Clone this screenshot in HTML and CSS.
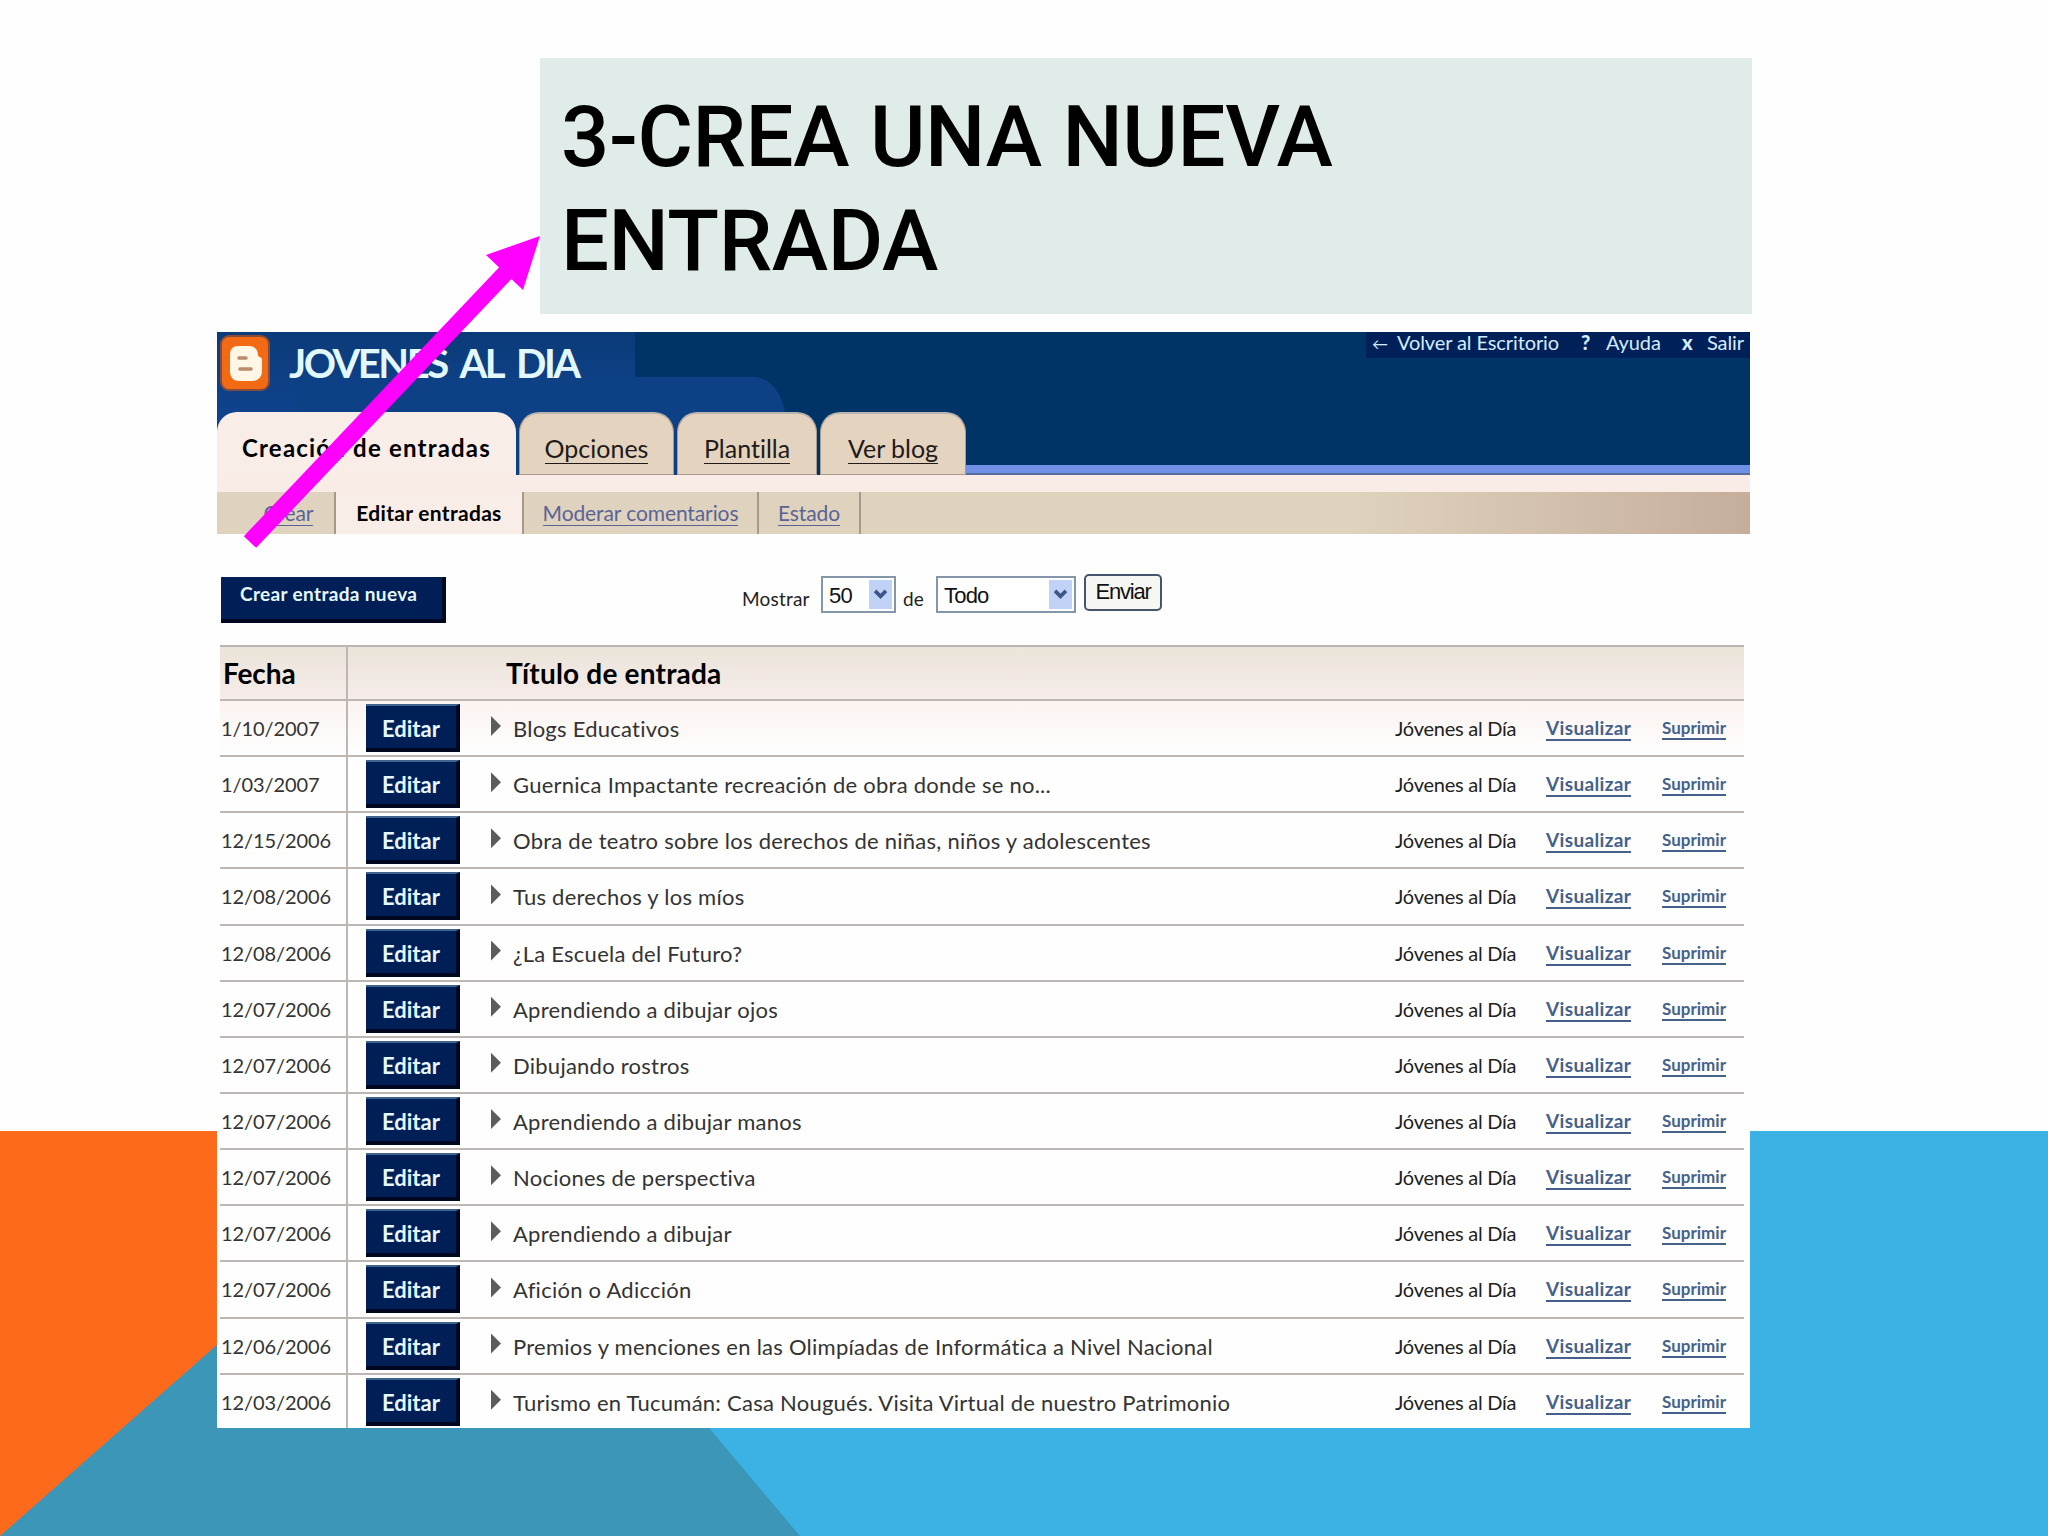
FILE: index.html
```html
<!DOCTYPE html>
<html lang="es">

<head>
    <meta charset="utf-8">
    <title>3-Crea una nueva entrada</title>
    <link rel="stylesheet" href="styles.css">
</head>

<body>
    <svg class="backdrop" viewBox="0 0 2048 1536">
        <rect x="0" y="1131" width="2048" height="405" fill="#3bb2e3"/>
        <polygon points="0,1536 217,1131 460,1131 709,1428 800,1536" fill="#3b96b7"/>
        <polygon points="0,1131 460,1131 0,1536" fill="#fe6a1b"/>
    </svg>

    <h1 class="title">3-CREA UNA NUEVA<br>ENTRADA</h1>

    <div class="shot">
        <div class="header">
            <svg class="glow" viewBox="0 0 1533 143">
                <defs>
                    <linearGradient id="fade" x1="0" y1="0" x2="0" y2="1">
                        <stop offset="0" stop-color="#0b3b78"/>
                        <stop offset="0.6" stop-color="#10438f"/>
                    </linearGradient>
                </defs>
                <rect width="418" height="143" fill="url(#fade)"/>
                <path d="M80 143V45H540Q562 50 568 80V143Z" fill="#0d4085"/>
            </svg>
            <div class="brand">
                <svg class="logo" viewBox="0 0 50 56">
                    <rect x="1" y="1" width="48" height="54" rx="8" fill="#f26a14" stroke="#8a4a3c" stroke-width="2"/>
                    <path d="M18 11h11c6 0 9 4 9 9 0 3 4 1 4 5v11c0 6-4 10-10 10H19c-6 0-9-4-9-10V20c0-6 3-9 8-9z" fill="#fff6e6"/>
                    <path d="M19 23h7M20 34h11" stroke="#b98a6c" stroke-width="3.5" stroke-linecap="round"/>
                </svg>
                <span class="blog">JOVENES AL DIA</span>
            </div>
            <div class="links">
                <span class="back"><b>←</b><i>Volver al Escritorio</i></span>
                <span class="help"><b>?</b><i>Ayuda</i></span>
                <span class="exit"><b>x</b><i>Salir</i></span>
            </div>
            <div class="tabs">
                <span class="tab active">Creación de entradas</span>
                <span class="tab t2"><u>Opciones</u></span>
                <span class="tab t3"><u>Plantilla</u></span>
                <span class="tab t4"><u>Ver blog</u></span>
                <span class="stripe"></span>
            </div>
        </div>
        <div class="band"></div>
        <div class="subnav">
            <span class="s1"><u>Crear</u></span>
            <span class="s2">Editar entradas</span>
            <span class="s3"><u>Moderar comentarios</u></span>
            <span class="s4"><u>Estado</u></span>
        </div>

        <div class="toolbar">
            <span class="newBtn">Crear entrada nueva</span>
            <span class="mostrar">Mostrar</span>
            <span class="select sel1">50<svg viewBox="0 0 24 32"><path d="M6 12l6 6 6-6" /></svg></span>
            <span class="de">de</span>
            <span class="select sel2">Todo<svg viewBox="0 0 24 32"><path d="M6 12l6 6 6-6" /></svg></span>
            <span class="send">Enviar</span>
        </div>

        <div class="list" id="list">
            <div class="row head">
                <span class="date">Fecha</span>
                <span class="name">Título de entrada</span>
            </div>
        </div>
    </div>

    <svg class="arrow" viewBox="0 0 2048 1536">
        <line x1="250" y1="542" x2="513" y2="265" stroke="#f0f" stroke-width="17"/>
        <polygon points="540,236 486,255 523,290" fill="#f0f"/>
    </svg>

    <script src="script.js"></script>
</body>

</html>
```
FILE: styles.css
```css
* {
    box-sizing: border-box;
}

body {
    margin: 0;
    width: 2048px;
    height: 1536px;
    overflow: hidden;
    background: #fefefe;
    font-family: Lato, "Liberation Sans", sans-serif;
    font-variant-ligatures: none;
    white-space: nowrap;
}

i {
    font-style: normal;
}
/* Slide shapes behind and over the content */

.backdrop,
.arrow {
    position: absolute;
    left: 0;
    top: 0;
    width: 2048px;
    height: 1536px;
}

.backdrop {
    z-index: -1;
}

.title {
    margin: 58px 0 0 540px;
    width: 1212px;
    height: 256px;
    padding: 27px 0 0 21px;
    background: #e0ecea;
    color: #000;
    font-family: Roboto, sans-serif;
    font-weight: 500;
    font-size: 85px;
    letter-spacing: -0.4px;
    line-height: 104px;
}

.shot {
    margin: 18px 0 0 217px;
    width: 1533px;
    height: 1096px;
    background: #fefefe;
}
/* Header */

.header {
    position: relative;
    height: 143px;
    background: #003366;
    display: grid;
    grid-template-columns: 1fr auto;
    grid-template-rows: 80px 63px;
}

.glow {
    position: absolute;
    left: 0;
    top: 0;
    width: 1533px;
    height: 143px;
}

.brand {
    position: relative;
    display: flex;
    padding: 3px 0 0 3px;
}

.logo {
    width: 50px;
    height: 56px;
}

.blog {
    margin-left: 19px;
    color: #e2f8ff;
    font-size: 40px;
    font-weight: bold;
    letter-spacing: -2.5px;
    word-spacing: 7px;
    line-height: 56px;
}

.links {
    position: relative;
    height: 26px;
    display: flex;
    background: #00205a;
    color: #d5ecff;
    font-size: 20px;
    letter-spacing: -0.1px;
    line-height: 20px;
}

.back {
    width: 207px;
    padding-left: 6px;
}

.help {
    width: 101px;
    padding-left: 8px;
}

.exit {
    width: 76px;
    padding-left: 8px;
}

.links b {
    display: inline-block;
    width: 25px;
    font-weight: 900;
}

.links .back b {
    font-size: 16px;
    font-weight: normal;
}

.tabs {
    position: relative;
    grid-column: 1 / 3;
    display: flex;
    gap: 3px;
}

.tab {
    height: 63px;
    border: 1px solid #a89a8c;
    border-top: 2px solid #b9b4b0;
    border-radius: 20px 20px 0 0;
    background: #e3d3bf;
    color: #221a18;
    font-size: 25px;
    line-height: 68px;
    text-align: center;
}

.tab u,
.subnav u {
    text-decoration: none;
    border-bottom: 1.5px solid currentColor;
}

.tab.active {
    width: 299px;
    border-color: #f8ede7;
    background: #f8ede7;
    color: #000;
    font-size: 24px;
    font-weight: bold;
    letter-spacing: 1.2px;
}

.t2 {
    width: 155px;
}

.t3 {
    width: 140px;
}

.t4 {
    width: 146px;
}

.stripe {
    flex: 1;
    align-self: flex-end;
    height: 10px;
    margin-left: -3px;
    background: #7090e6;
    border-bottom: 2px solid #5d6b9a;
}

.band {
    height: 17px;
    background: #f9ece6;
}

.subnav {
    height: 42px;
    display: flex;
    background: linear-gradient(to right, #dfd3c0 0, #dfd3bd 74%, #c5ae9b 100%);
    color: #5a6494;
    font-size: 21px;
    letter-spacing: -0.1px;
    line-height: 42px;
    text-align: center;
}

.subnav span {
    border-right: 2px solid #a59a8d;
}

.subnav .s1 {
    width: 119px;
    padding-left: 26px;
}

.subnav .s2 {
    width: 188px;
    background: #f8ede7;
    color: #000;
    font-weight: bold;
    letter-spacing: 0.3px;
}

.s3 {
    width: 235px;
}

.s4 {
    width: 102px;
}
/* Filter bar */

.toolbar {
    display: flex;
    align-items: flex-start;
    height: 111px;
    padding: 40px 0 0 4px;
    color: #222;
}

.newBtn {
    width: 225px;
    height: 46px;
    margin-top: 3px;
    padding-left: 19px;
    background: #001f57;
    border-right: 4px solid #000720;
    border-bottom: 4px solid #000720;
    color: #e6f7ff;
    font-size: 19px;
    font-weight: bold;
    letter-spacing: 0.35px;
    line-height: 34px;
}

.mostrar {
    margin: 13px 0 0 296px;
    width: 79px;
    font-size: 19px;
    letter-spacing: 0.2px;
    line-height: 24px;
}

.select {
    display: flex;
    justify-content: space-between;
    height: 37px;
    margin-top: 2px;
    padding: 2px 2px 2px 6px;
    border: 2px solid #8497a8;
    background: #fff;
    color: #111;
    font-family: "Liberation Sans", sans-serif;
    font-size: 22px;
    letter-spacing: -0.8px;
    line-height: 31px;
}

.select svg {
    width: 23px;
    height: 29px;
    background: #c0d2f6;
    fill: none;
    stroke: #3d5487;
    stroke-width: 4;
}

.sel1 {
    width: 75px;
}

.de {
    margin: 13px 0 0 7px;
    width: 33px;
    font-size: 19px;
    line-height: 24px;
}

.sel2 {
    width: 140px;
}

.send {
    width: 78px;
    height: 37px;
    margin-left: 8px;
    border: 2px solid #46556b;
    border-radius: 5px;
    background: #f6f6f2;
    color: #111;
    font-family: "Liberation Sans", sans-serif;
    font-size: 22px;
    letter-spacing: -1.2px;
    line-height: 31px;
    text-align: center;
}
/* Post list */

.list {
    width: 1524px;
    margin-left: 3px;
}

.row {
    display: grid;
    grid-template-columns: 128px 143px 22px 1fr 151px 116px 82px;
    grid-template-rows: 100%;
    height: 56.15px;
    border-bottom: 2px solid #bdb7b3;
    color: #333;
    font-size: 22px;
    line-height: 55px;
}

.row:last-child {
    height: 53px;
    border-bottom: none;
}

.row.head {
    height: 56px;
    border-top: 2px solid #bdb7b3;
    background: linear-gradient(#eae4d9, #f6ecea);
    color: #000;
    font-weight: bold;
    line-height: 53px;
}

.row.first {
    background: linear-gradient(#fbf3f0, #fefefe);
}

.date {
    padding-left: 1px;
    border-right: 2px solid #bdb7b3;
    font-size: 20px;
    letter-spacing: -0.1px;
}

.name {
    letter-spacing: 0.25px;
}

.head .date {
    padding-left: 3px;
    font-size: 28px;
}

.head .name {
    grid-column: 3 / 8;
    padding-left: 15px;
    font-size: 28px;
    letter-spacing: 0.2px;
}

.edit {
    width: 94px;
    height: 48px;
    margin: 3px 0 0 18px;
    background: #001f57;
    border-top: 2px solid #40638c;
    border-right: 4px solid #000720;
    border-bottom: 4px solid #000720;
    color: #e6f7ff;
    font-size: 22px;
    font-weight: bold;
    line-height: 45px;
    text-align: center;
}

.tri {
    width: 10px;
    height: 20px;
    margin-top: 15px;
    background: #5c5c5c;
    clip-path: polygon(0 0, 100% 50%, 0 100%);
}

.author {
    color: #222;
    font-size: 20px;
    letter-spacing: -0.25px;
    line-height: 54px;
}

.view,
.del {
    color: #45618a;
    font-size: 19px;
    font-weight: bold;
    letter-spacing: 0.35px;
    line-height: 54px;
}

.del {
    font-size: 17px;
    letter-spacing: 0;
}

.view u,
.del u {
    text-decoration: none;
    border-bottom: 2px solid #45618a;
}
```
FILE: script.js
```js
var posts = [
    ["1/10/2007", "Blogs Educativos"],
    ["1/03/2007", "Guernica Impactante recreación de obra donde se no..."],
    ["12/15/2006", "Obra de teatro sobre los derechos de niñas, niños y adolescentes"],
    ["12/08/2006", "Tus derechos y los míos"],
    ["12/08/2006", "¿La Escuela del Futuro?"],
    ["12/07/2006", "Aprendiendo a dibujar ojos"],
    ["12/07/2006", "Dibujando rostros"],
    ["12/07/2006", "Aprendiendo a dibujar manos"],
    ["12/07/2006", "Nociones de perspectiva"],
    ["12/07/2006", "Aprendiendo a dibujar"],
    ["12/07/2006", "Afición o Adicción"],
    ["12/06/2006", "Premios y menciones en las Olimpíadas de Informática a Nivel Nacional"],
    ["12/03/2006", "Turismo en Tucumán: Casa Nougués. Visita Virtual de nuestro Patrimonio"]
];

var list = document.getElementById("list");
posts.forEach(function(post, i) {
    var row = document.createElement("div");
    row.className = i == 0 ? "row first" : "row";
    row.innerHTML = '<span class="date">' + post[0] + '</span>' +
        '<span class="edit">Editar</span>' +
        '<span class="tri"></span>' +
        '<span class="name">' + post[1] + '</span>' +
        '<span class="author">Jóvenes al Día</span>' +
        '<span class="view"><u>Visualizar</u></span>' +
        '<span class="del"><u>Suprimir</u></span>';
    list.appendChild(row);
});
```
